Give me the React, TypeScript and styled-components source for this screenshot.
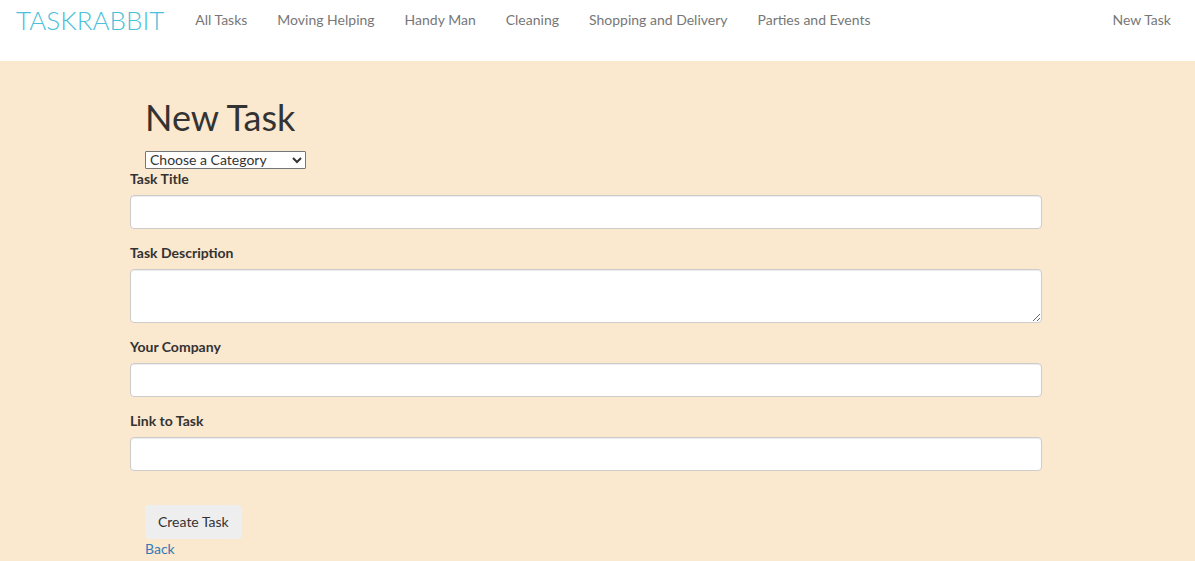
import React from "react";
import styled, { createGlobalStyle, css } from "styled-components";

const GlobalStyle = createGlobalStyle`
  *, *::before, *::after { box-sizing: border-box; }
  body {
    margin: 0;
    background: #fae8cf;
    color: #333;
    font-family: Lato, "Helvetica Neue", Helvetica, Arial, sans-serif;
    font-size: 14px;
    line-height: 20px;
  }
  input, select, textarea, button { font-family: inherit; font-size: inherit; line-height: inherit; }
`;

const Navbar = styled.header`
  display: flex;
  align-items: flex-start;
  min-height: 61px;
  padding: 0 9px 0 16px;
  background: #fff;
`;

const Brand = styled.a`
  margin-right: 16px;
  padding: 10px 0;
  color: #4bbfdb;
  font-size: 26px;
  font-weight: 300;
  line-height: 20px;
  text-decoration: none;
`;

const NavLinks = styled.nav`
  display: flex;
  flex: 1;
`;

const NavLink = styled.a<{ $end?: boolean }>`
  padding: 10px 15px;
  color: #777;
  text-decoration: none;
  white-space: nowrap;
  ${(p) => p.$end && css`margin-left: auto;`}
`;

const Page = styled.main`
  padding: 36px 23px 0 0;
`;

const Form = styled.form`
  max-width: 942px;
  margin: 0 auto;
  padding: 0 15px;
`;

const Inset = styled.div`
  padding: 0 15px;
`;

const Title = styled.h1`
  margin: 0 0 14px;
  font-size: 36px;
  font-weight: 400;
  line-height: 40px;
`;

const SelectWrap = styled.div`
  display: grid;
  grid-template-columns: minmax(0, 1fr);
  width: 161px;
  align-items: center;
`;

const CategorySelect = styled.select`
  grid-area: 1 / 1;
  width: 100%;
  appearance: none;
  padding: 0 16px 0 4px;
  border: 1px solid #767676;
  border-radius: 1px;
  background: #fff;
  color: #333;
  line-height: 16px;
`;

const Chevron = styled.svg`
  grid-area: 1 / 1;
  justify-self: end;
  margin-right: 4px;
  fill: none;
  stroke: #333;
  stroke-width: 2;
  pointer-events: none;
`;

const Field = styled.div`
  margin-bottom: 14px;
`;

const Label = styled.label`
  display: block;
  margin-bottom: 6px;
  font-weight: 700;
`;

const control = css`
  display: block;
  width: 100%;
  padding: 6px 12px;
  border: 1px solid #ccc;
  border-radius: 4px;
  background: #fff;
  color: #555;
  box-shadow: inset 0 1px 1px rgba(0, 0, 0, 0.075);
`;

const TextInput = styled.input`
  ${control}
  height: 34px;
`;

const TextArea = styled.textarea`
  ${control}
  height: 54px;
  resize: vertical;
`;

const SubmitButton = styled.button`
  display: block;
  margin-top: 34px;
  padding: 6px 12px;
  border: 1px solid transparent;
  border-radius: 4px;
  background: #eee;
  color: #333;
`;

const BackLink = styled.a`
  color: #337ab7;
  text-decoration: none;
`;

const categories = ["All Tasks", "Moving Helping", "Handy Man", "Cleaning", "Shopping and Delivery", "Parties and Events"];

export default function App() {
  return (
    <>
      <GlobalStyle />
      <Navbar>
        <Brand href="#">TASKRABBIT</Brand>
        <NavLinks>
          {categories.map((name) => (
            <NavLink key={name} href="#">{name}</NavLink>
          ))}
          <NavLink href="#" $end>New Task</NavLink>
        </NavLinks>
      </Navbar>
      <Page>
        <Form onSubmit={(e) => e.preventDefault()}>
          <Inset>
            <Title>New Task</Title>
            <SelectWrap>
              <CategorySelect aria-label="Category" defaultValue="">
                <option value="">Choose a Category</option>
                {categories.slice(1).map((name) => (
                  <option key={name}>{name}</option>
                ))}
              </CategorySelect>
              <Chevron width="10" height="8" viewBox="0 0 10 8" aria-hidden="true">
                <path d="M1 2l4 4 4-4" />
              </Chevron>
            </SelectWrap>
          </Inset>
          <Field>
            <Label htmlFor="title">Task Title</Label>
            <TextInput id="title" type="text" />
          </Field>
          <Field>
            <Label htmlFor="description">Task Description</Label>
            <TextArea id="description" />
          </Field>
          <Field>
            <Label htmlFor="company">Your Company</Label>
            <TextInput id="company" type="text" />
          </Field>
          <Field>
            <Label htmlFor="link">Link to Task</Label>
            <TextInput id="link" type="url" />
          </Field>
          <Inset>
            <SubmitButton type="submit">Create Task</SubmitButton>
            <BackLink href="#">Back</BackLink>
          </Inset>
        </Form>
      </Page>
    </>
  );
}
